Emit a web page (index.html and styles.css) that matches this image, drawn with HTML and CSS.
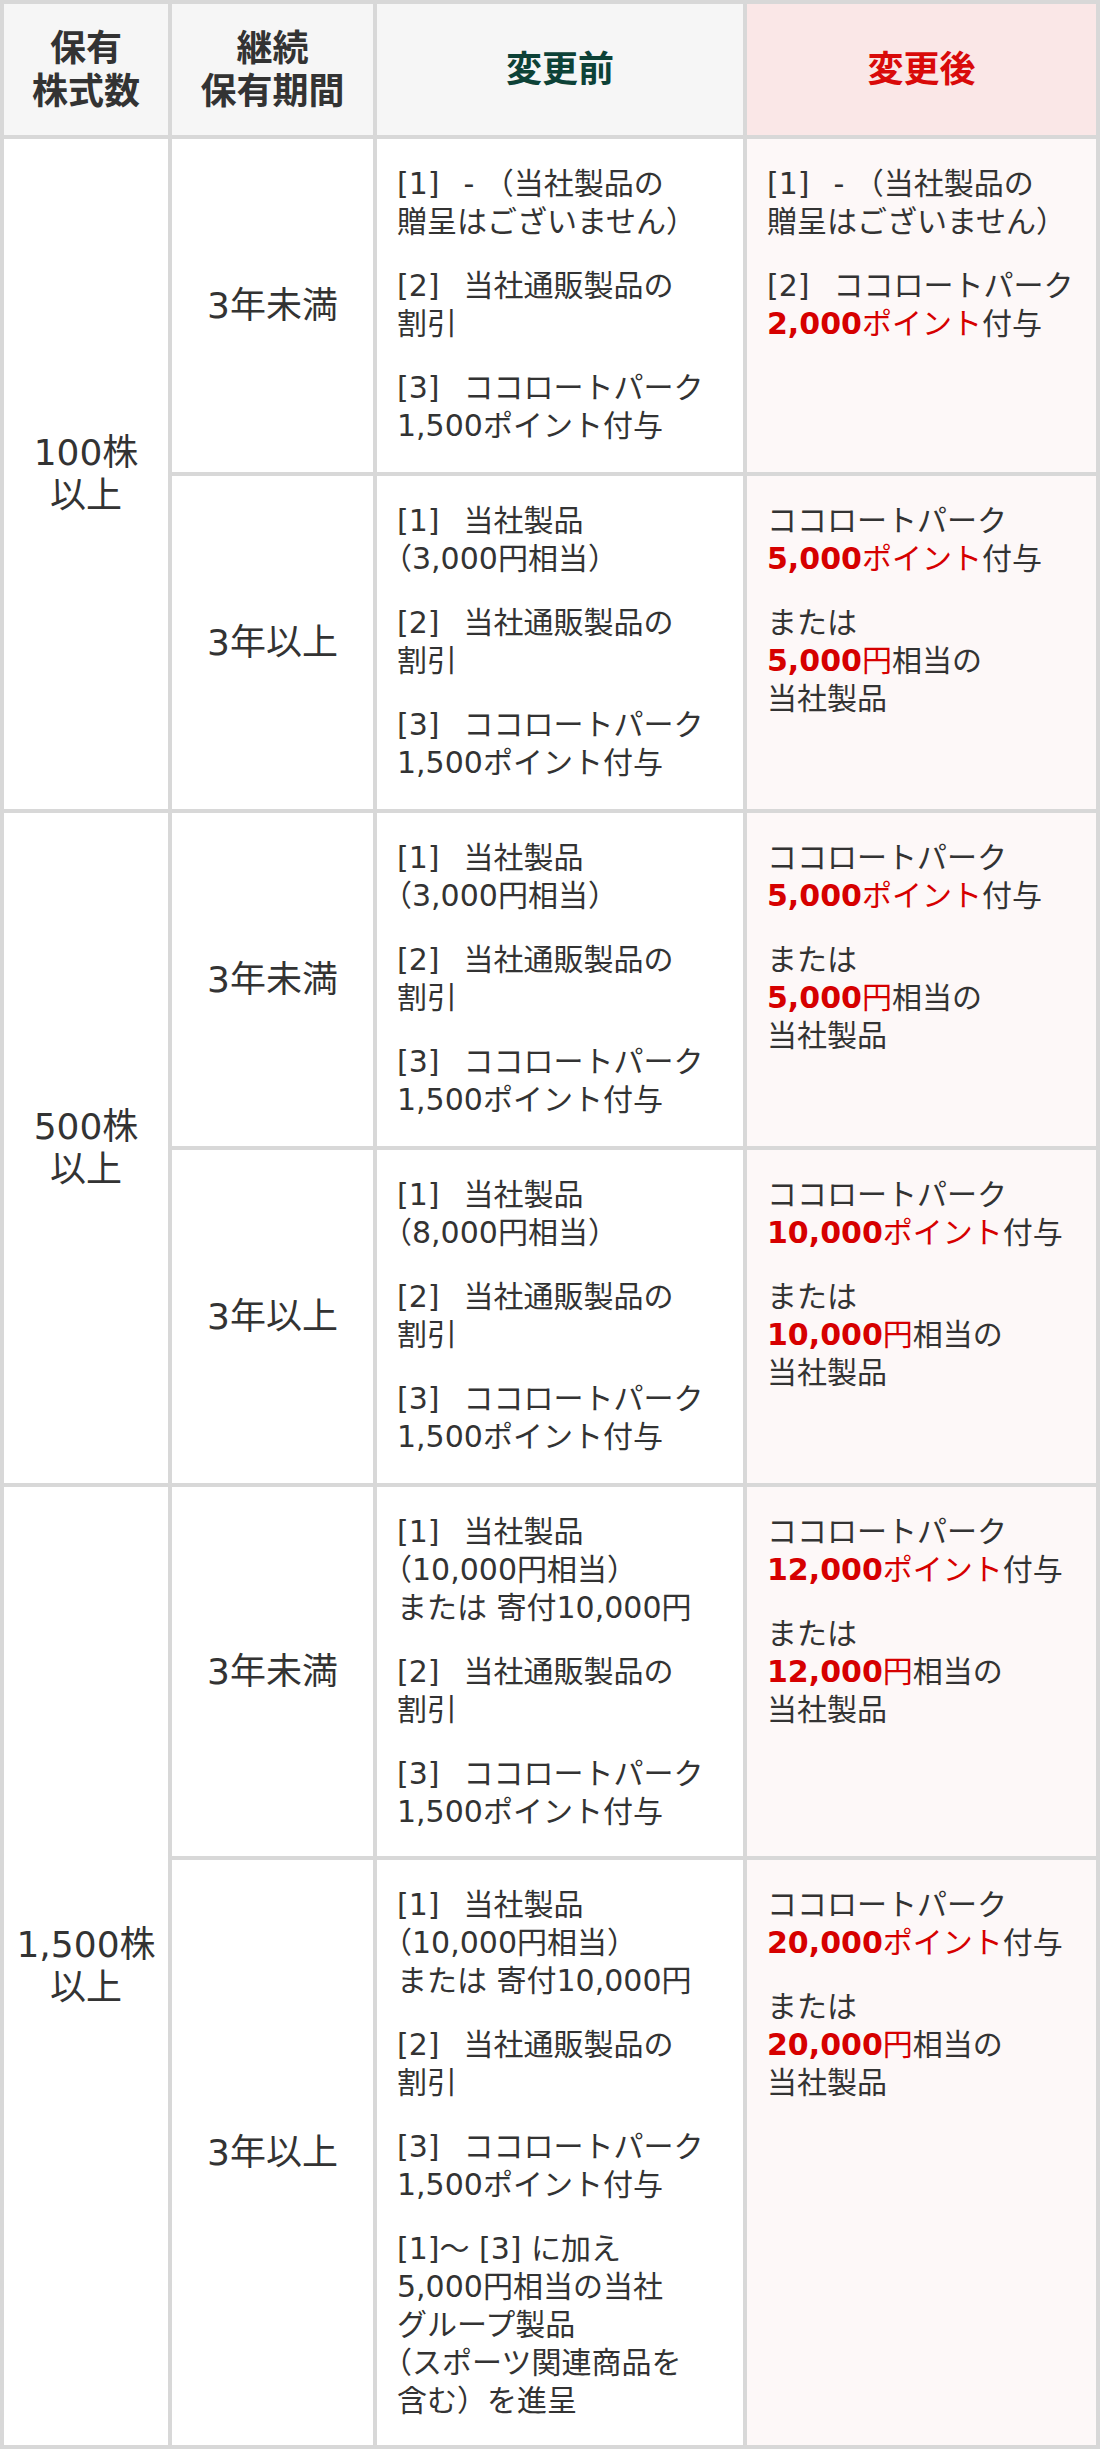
FILE: index.html
```html
<!DOCTYPE html>
<html lang="ja">
<head>
<meta charset="utf-8">
<title>株主優待制度の変更</title>
<link rel="stylesheet" href="styles.css">
</head>
<body>
<table class="compare">
  <colgroup>
    <col class="c-shares">
    <col class="c-period">
    <col class="c-before">
    <col class="c-after">
  </colgroup>
  <thead>
    <tr>
      <th class="h-plain">保有<br>株式数</th>
      <th class="h-plain">継続<br>保有期間</th>
      <th class="h-before">変更前</th>
      <th class="h-after">変更後</th>
    </tr>
  </thead>
  <tbody>
    <tr class="std">
      <td class="shares" rowspan="2">100株<br>以上</td>
      <td class="period">3年未満</td>
      <td class="before">
        <p><span class="idx">[1]</span>- （当社製品の<br>贈呈はございません）</p>
        <p><span class="idx">[2]</span>当社通販製品の<br>割引</p>
        <p><span class="idx">[3]</span>ココロートパーク<br>1,500ポイント付与</p>
      </td>
      <td class="after">
        <p><span class="idx">[1]</span>- （当社製品の<br>贈呈はございません）</p>
        <p><span class="idx">[2]</span>ココロートパーク<br><span class="red"><b>2,000</b>ポイント</span>付与</p>
      </td>
    </tr>
    <tr class="std">
      <td class="period">3年以上</td>
      <td class="before">
        <p><span class="idx">[1]</span>当社製品<br>（3,000円相当）</p>
        <p><span class="idx">[2]</span>当社通販製品の<br>割引</p>
        <p><span class="idx">[3]</span>ココロートパーク<br>1,500ポイント付与</p>
      </td>
      <td class="after">
        <p>ココロートパーク<br><span class="red"><b>5,000</b>ポイント</span>付与</p>
        <p>または<br><span class="red"><b>5,000</b>円</span>相当の<br>当社製品</p>
      </td>
    </tr>
    <tr class="std">
      <td class="shares" rowspan="2">500株<br>以上</td>
      <td class="period">3年未満</td>
      <td class="before">
        <p><span class="idx">[1]</span>当社製品<br>（3,000円相当）</p>
        <p><span class="idx">[2]</span>当社通販製品の<br>割引</p>
        <p><span class="idx">[3]</span>ココロートパーク<br>1,500ポイント付与</p>
      </td>
      <td class="after">
        <p>ココロートパーク<br><span class="red"><b>5,000</b>ポイント</span>付与</p>
        <p>または<br><span class="red"><b>5,000</b>円</span>相当の<br>当社製品</p>
      </td>
    </tr>
    <tr class="std">
      <td class="period">3年以上</td>
      <td class="before">
        <p><span class="idx">[1]</span>当社製品<br>（8,000円相当）</p>
        <p><span class="idx">[2]</span>当社通販製品の<br>割引</p>
        <p><span class="idx">[3]</span>ココロートパーク<br>1,500ポイント付与</p>
      </td>
      <td class="after">
        <p>ココロートパーク<br><span class="red"><b>10,000</b>ポイント</span>付与</p>
        <p>または<br><span class="red"><b>10,000</b>円</span>相当の<br>当社製品</p>
      </td>
    </tr>
    <tr>
      <td class="shares" rowspan="2">1,500株<br>以上</td>
      <td class="period">3年未満</td>
      <td class="before">
        <p><span class="idx">[1]</span>当社製品<br>（10,000円相当）<br>または 寄付10,000円</p>
        <p><span class="idx">[2]</span>当社通販製品の<br>割引</p>
        <p><span class="idx">[3]</span>ココロートパーク<br>1,500ポイント付与</p>
      </td>
      <td class="after">
        <p>ココロートパーク<br><span class="red"><b>12,000</b>ポイント</span>付与</p>
        <p>または<br><span class="red"><b>12,000</b>円</span>相当の<br>当社製品</p>
      </td>
    </tr>
    <tr>
      <td class="period">3年以上</td>
      <td class="before">
        <p><span class="idx">[1]</span>当社製品<br>（10,000円相当）<br>または 寄付10,000円</p>
        <p><span class="idx">[2]</span>当社通販製品の<br>割引</p>
        <p><span class="idx">[3]</span>ココロートパーク<br>1,500ポイント付与</p>
        <p>[1]〜 [3] に加え<br>5,000円相当の当社<br>グループ製品<br>（スポーツ関連商品を<br>含む）を進呈</p>
      </td>
      <td class="after">
        <p>ココロートパーク<br><span class="red"><b>20,000</b>ポイント</span>付与</p>
        <p>または<br><span class="red"><b>20,000</b>円</span>相当の<br>当社製品</p>
      </td>
    </tr>
  </tbody>
</table>
</body>
</html>
```

FILE: styles.css
```css
html, body {
  margin: 0;
  padding: 0;
  background: #ffffff;
}

body {
  font-family: "DejaVu Sans", "Noto Sans CJK JP", sans-serif;
  color: #333333;
}

.compare {
  width: 1100px;
  table-layout: fixed;
  border-collapse: separate;
  border-spacing: 4px;
  background: #d8d8d8;
}

.c-shares { width: 164px; }
.c-period { width: 201px; }
.c-before { width: 366px; }
.c-after { width: 349px; }

.compare th {
  height: 131px;
  padding: 0 8px;
  font-size: 36px;
  line-height: 43px;
  font-weight: bold;
  text-align: center;
  vertical-align: middle;
  background: #f6f6f6;
  color: #333333;
}

.compare th.h-before {
  color: #0d4237;
}

.compare th.h-after {
  background: #fae7e7;
  color: #d90a0a;
}

.compare tr.std {
  height: 333px;
}

.compare td {
  background: #ffffff;
}

.compare td.shares,
.compare td.period {
  padding: 0 6px;
  font-size: 36px;
  line-height: 43px;
  text-align: center;
  vertical-align: middle;
}

.compare td.before,
.compare td.after {
  padding: 26px 20px 25px;
  font-size: 30px;
  line-height: 38px;
  vertical-align: top;
  text-spacing-trim: trim-start;
}

.compare td.after {
  background: #fdf8f8;
}

.compare p {
  margin: 0 0 26px;
  white-space: nowrap;
}

.compare p:last-child {
  margin-bottom: 0;
}

.idx {
  margin-right: 24px;
}

.red {
  color: #d60000;
}

.red b {
  font-weight: bold;
}
```
